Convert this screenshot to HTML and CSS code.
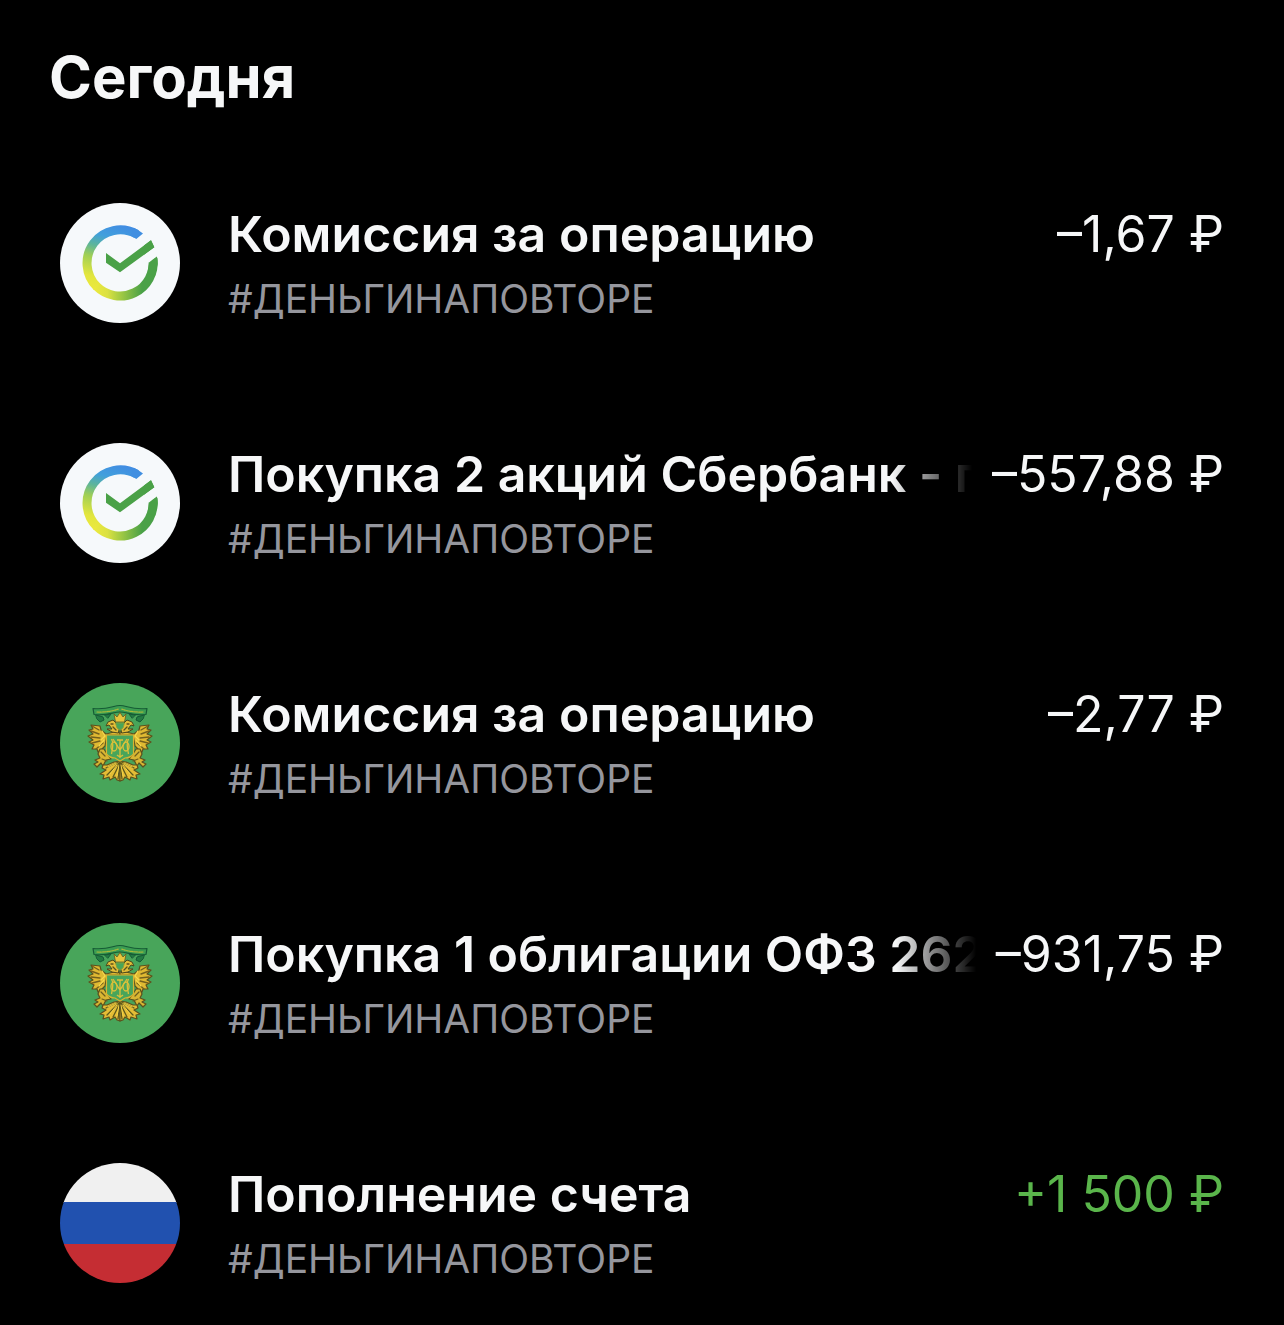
FILE: index.html
```html
<!DOCTYPE html>
<html lang="ru">
<head>
<meta charset="UTF-8">
<meta name="viewport" content="width=device-width, initial-scale=1">
<title>Операции</title>
<link rel="stylesheet" href="styles.css">
</head>
<body>

<svg class="defs" aria-hidden="true">
  <defs>
    <linearGradient id="ring-left" gradientUnits="userSpaceOnUse" x1="60" y1="22" x2="40" y2="92">
      <stop offset="0" stop-color="#418de2"/>
      <stop offset=".2" stop-color="#41a0dc"/>
      <stop offset=".36" stop-color="#5db59a"/>
      <stop offset=".52" stop-color="#a0cf54"/>
      <stop offset=".78" stop-color="#e3e63e"/>
      <stop offset="1" stop-color="#eee93c"/>
    </linearGradient>
    <linearGradient id="ring-bottom" gradientUnits="userSpaceOnUse" x1="36" y1="84" x2="82" y2="84">
      <stop offset="0" stop-color="#e9e83e"/>
      <stop offset=".25" stop-color="#dbe142"/>
      <stop offset=".55" stop-color="#9fc944"/>
      <stop offset="1" stop-color="#4aa147"/>
    </linearGradient>

    <symbol id="sber" viewBox="0 0 120 120">
      <circle cx="60" cy="60" r="60" fill="#f6f9fb"/>
      <path d="M36.400 83.200A33.200 33.200 0 0 0 92.900 55.500" fill="none" stroke="url(#ring-bottom)" stroke-width="9"/>
      <path d="M76.600 31.200A33.200 33.200 0 0 0 37 83.800" fill="none" stroke="url(#ring-left)" stroke-width="9"/>
      <path d="M96.800 53.300L89 59.500L87.500 70L95 73L97.700 61Q98 57 96.800 53.300Z" fill="#4aa147"/>
      <path d="M74 25Q79 27 83 30.400L76.300 36Q73 33.500 70 32.500Z" fill="#418fe1"/>
      <path d="M46 50L60 60.300L91 37.300L94.300 44.300L60 69.300L46 59.700Z" fill="#4aa147"/>
      <path d="M86 51L97 43L98 53L96.800 53.300L89 59.500L86 59Z" fill="#f6f9fb"/>
      <path d="M84 42.500L91 37.300L94.300 44.300L84 51.800Z" fill="#4aa147"/>
    </symbol>

    <g id="eagle-half" stroke-linejoin="round" stroke-linecap="round">
      <!-- ribbon -->
      <path d="M60 22.500C53 22.500 49 27 33 25.500L34 31.500C48 33 53 29 60 29" fill="#3b9d52" stroke="#155b35" stroke-width="1.200"/>
      <path d="M37 29Q49 29.500 59 25.800" fill="none" stroke="#a9b93a" stroke-width="1.200" stroke-dasharray="1.500 1"/>
      <path d="M36 32L43 34L44 37L40 39L37 36Z M45 32L51 31L48 35Z" fill="#237c43" stroke="#155b35"/>
      <!-- wing -->
      <path d="M46 51L41 47L40 43L31 42L33 46L29 47L33 51L28 53L33 57L29 59L34 62L32 66L37 66L38 69L42 66L45 63L46 57L47 52L60 52V49L54 49Z" fill="#dfb932" stroke="#5b511e" stroke-width="1.200"/>
      <path d="M32 43L39 47M31 48L39 51M31 54L40 55M32 60L40 58M36 66L43 60" fill="none" stroke="#73601d" stroke-width="1.400"/>
      <path d="M42 48L45 53L41 57M44 57L39 63" fill="none" stroke="#f7d94c" stroke-width="1.200"/>
      <!-- head -->
      <path d="M58 50L52 49L47 46L52 46L49 42L46 43L48 39L53 37L57 41L59 46Z" fill="#e1bd38" stroke="#4c481c"/>
      <path d="M51 41L53 41M53 44L56 47" stroke="#60521b" stroke-width="1.300"/>
      <!-- leg and claws -->
      <path d="M44 66L40 66L38 71L40 75L35 77L38 79L34 81L37 84L41 80L43 83L46 77L51 76L47 71Z" fill="#d9b632" stroke="#5b511e" stroke-width="1.200"/>
      <path d="M41 69L45 73M42 76L47 78" stroke="#6b5c1e" stroke-width="1.200"/>
      <!-- tail -->
      <path d="M60 78L54 79L47 82L43 82L42 85L46 87L40 91L44 92L43 96L49 94L50 97L55 94L57 97L60 98Z" fill="#e4bd35" stroke="#5b511e" stroke-width="1.200"/>
      <path d="M58 79L46 85M59 80L47 92M60 80L53 94M60 80L58 96" fill="none" stroke="#5d591d" stroke-width="1.300"/>
      <path d="M56 80L48 84M57 82L50 91M59 82L57 93" fill="none" stroke="#f4d348" stroke-width="1"/>
    </g>
    <symbol id="minfin" viewBox="0 0 120 120">
      <circle cx="60" cy="60" r="60" fill="#48a55a"/>
      <use href="#eagle-half"/>
      <use href="#eagle-half" transform="matrix(-1 0 0 1 120 0)"/>
      <path d="M54 31L57 34L60 29.500L63 34L66 31L64.500 39L55.500 39Z" fill="#e7c53c" stroke="#655a20" stroke-width=".8"/>
      <path d="M55.500 40H64.500L63 45L60 47L57 45Z" fill="#48a55a" stroke="#8a9d35" stroke-width=".8"/>
      <path d="M46.500 52H73.500V71Q70 75 65 75L60 78L55 75Q50 75 46.500 71Z" fill="#48a55a" stroke="#d7b431" stroke-width="1.200"/>
      <!-- monogram ornament -->
      <g fill="none" stroke="#dbc13a" stroke-width="1.300">
        <path d="M51.500 56Q54 60 51.500 71M68.500 56Q66 60 68.500 71M60 57V75M53 56L60 67L67 56M57 57H63"/>
        <ellipse cx="54" cy="63.500" rx="3" ry="4.500"/>
        <ellipse cx="66" cy="63.500" rx="3" ry="4.500"/>
        <path d="M57 72Q60 75 63 72"/>
      </g>
    </symbol>

    <clipPath id="round"><circle cx="60" cy="60" r="60"/></clipPath>
    <symbol id="russia" viewBox="0 0 120 120">
      <g clip-path="url(#round)">
        <path fill="#f0f0f0" d="M0 0h120v40H0z"/>
        <path fill="#2151af" d="M0 39h120v42H0z"/>
        <path fill="#c52d33" d="M0 81h120v39H0z"/>
      </g>
    </symbol>
  </defs>
</svg>

<main class="history">
  <h1>Сегодня</h1>
  <ul class="operations">
    <li class="operation">
      <svg class="logo" aria-hidden="true"><use href="#sber"/></svg>
      <div class="info">
        <div class="line">
          <span class="name">Комиссия за операцию</span>
          <span class="amount">–1,67 ₽</span>
        </div>
        <div class="account">#ДЕНЬГИНАПОВТОРЕ</div>
      </div>
    </li>
    <li class="operation">
      <svg class="logo" aria-hidden="true"><use href="#sber"/></svg>
      <div class="info">
        <div class="line">
          <span class="name fade">Покупка 2 акций Сбербанк - п</span>
          <span class="amount">–557,88 ₽</span>
        </div>
        <div class="account">#ДЕНЬГИНАПОВТОРЕ</div>
      </div>
    </li>
    <li class="operation">
      <svg class="logo" aria-hidden="true"><use href="#minfin"/></svg>
      <div class="info">
        <div class="line">
          <span class="name">Комиссия за операцию</span>
          <span class="amount">–2,77 ₽</span>
        </div>
        <div class="account">#ДЕНЬГИНАПОВТОРЕ</div>
      </div>
    </li>
    <li class="operation">
      <svg class="logo" aria-hidden="true"><use href="#minfin"/></svg>
      <div class="info">
        <div class="line">
          <span class="name fade">Покупка 1 облигации ОФЗ 262</span>
          <span class="amount">–931,75 ₽</span>
        </div>
        <div class="account">#ДЕНЬГИНАПОВТОРЕ</div>
      </div>
    </li>
    <li class="operation">
      <svg class="logo" aria-hidden="true"><use href="#russia"/></svg>
      <div class="info">
        <div class="line">
          <span class="name">Пополнение счета</span>
          <span class="amount income">+1 500 ₽</span>
        </div>
        <div class="account">#ДЕНЬГИНАПОВТОРЕ</div>
      </div>
    </li>
  </ul>
</main>

</body>
</html>
```
FILE: styles.css
```css
body{
  margin:0;
  background:#000;
  color:#f6f7f8;
  font-family:Inter, "Liberation Sans", sans-serif;
}
.defs{
  position:absolute;
  width:0;
  height:0;
}
.history{
  padding:42px 60px;
}
h1{
  margin:0 0 91px -11px;
  font-size:58px;
  font-weight:700;
  line-height:70px;
}
.operations{
  display:grid;
  grid-template-columns:minmax(0, 1fr);
  gap:120px;
  margin:0;
  padding:0;
  list-style:none;
}
.operation{
  display:flex;
  gap:48px;
}
.logo{
  flex:none;
  width:120px;
  height:120px;
}
.info{
  flex:1;
  min-width:0;
}
.line{
  display:flex;
  justify-content:space-between;
  gap:20px;
  font-size:50px;
  line-height:62px;
  white-space:nowrap;
}
.name{
  min-width:0;
  overflow:hidden;
  font-weight:600;
}
.fade{
  flex:1;
  -webkit-mask-image:linear-gradient(to left, transparent, #000 80px);
  mask-image:linear-gradient(to left, transparent, #000 80px);
}
.amount{
  flex:none;
}
.income{
  color:#5ab54b;
}
.account{
  margin-top:10px;
  color:#95969d;
  font-size:39px;
  line-height:48px;
}
```
